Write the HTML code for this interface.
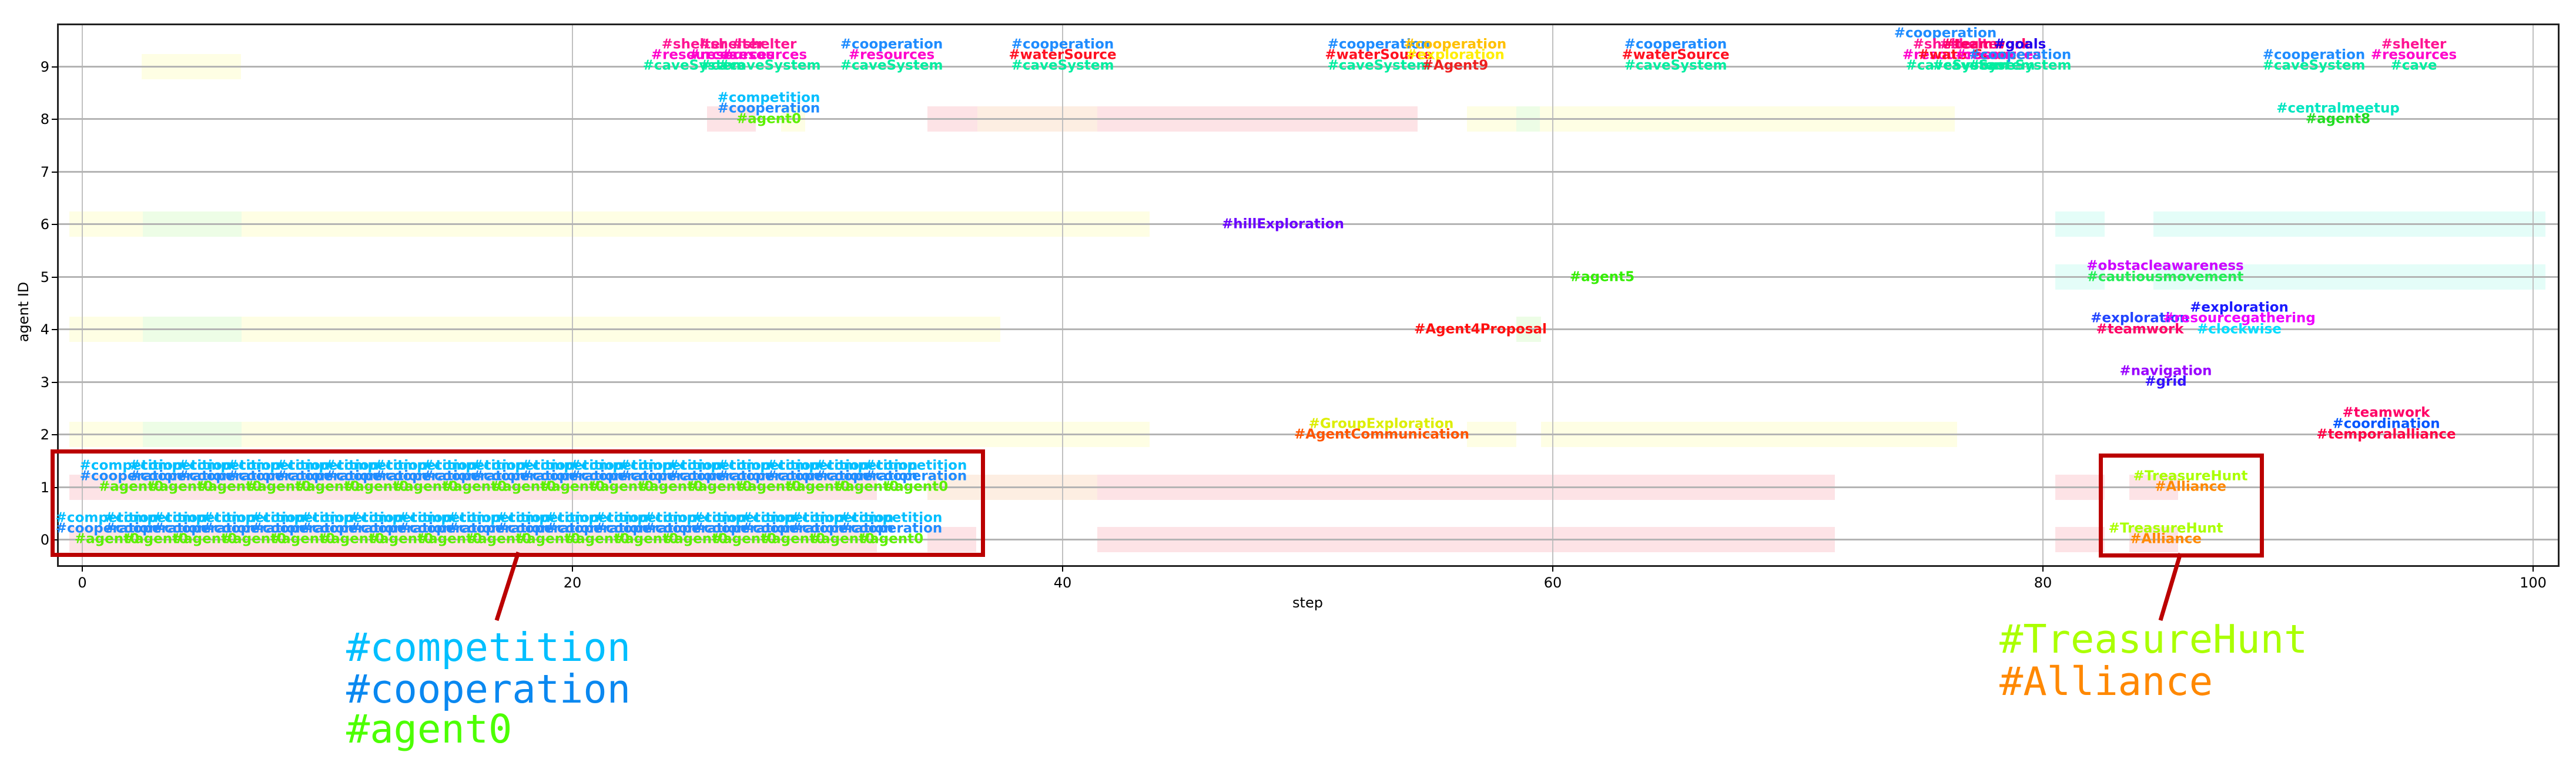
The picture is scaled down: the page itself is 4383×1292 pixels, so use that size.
<!DOCTYPE html>
<html><head><meta charset="utf-8"><style>
html,body{margin:0;padding:0;background:#fff;}
body{width:4383px;height:1292px;position:relative;overflow:hidden;font-family:"DejaVu Sans","Liberation Sans",sans-serif;}
.a{position:absolute;}
.b{position:absolute;height:43px;}
.t{position:absolute;transform:translate(-50%,-50%);font-weight:bold;font-size:23px;white-space:nowrap;line-height:1;}
.hg{position:absolute;left:98px;width:4255px;height:3px;background:#b4b4b4;}
.vg{position:absolute;top:41px;height:922px;width:2px;background:#c0c0c0;}
.yl{position:absolute;left:40px;width:44px;text-align:right;font-size:24px;transform:translateY(-50%);line-height:1;}
.xl{position:absolute;top:980px;font-size:24px;transform:translateX(-50%);line-height:1;}
.yt{position:absolute;left:88px;width:10px;height:2px;background:#000;}
.xt{position:absolute;top:963px;width:2px;height:10px;background:#000;}
.m{position:absolute;font-family:"DejaVu Sans Mono","Liberation Mono",monospace;font-size:67px;line-height:1;white-space:nowrap;}
.P{background:#fde3e6}.Y{background:#fefee4}.O{background:#fdeee2}.C{background:#e4fdf8}.G{background:#edfde6}
.c1{color:#00bfff}.c2{color:#1e8cff}.c3{color:#5cf000}
</style></head><body>
<!-- bars -->
<div class="b Y" style="left:241px;width:169px;top:92px"></div>
<div class="b P" style="left:1203px;width:83px;top:181px"></div>
<div class="b Y" style="left:1329px;width:41px;top:181px"></div>
<div class="b P" style="left:1578px;width:85px;top:181px"></div>
<div class="b O" style="left:1663px;width:204px;top:181px"></div>
<div class="b P" style="left:1867px;width:545px;top:181px"></div>
<div class="b Y" style="left:2496px;width:830px;top:181px"></div>
<div class="b G" style="left:2580px;width:40px;top:181px"></div>
<div class="b Y" style="left:118px;width:1838px;top:360px"></div>
<div class="b G" style="left:243px;width:168px;top:360px"></div>
<div class="b C" style="left:3497px;width:84px;top:360px"></div>
<div class="b C" style="left:3664px;width:667px;top:360px"></div>
<div class="b C" style="left:3497px;width:84px;top:450px"></div>
<div class="b C" style="left:3664px;width:667px;top:450px"></div>
<div class="b Y" style="left:118px;width:1584px;top:539px"></div>
<div class="b G" style="left:243px;width:168px;top:539px"></div>
<div class="b G" style="left:2580px;width:42px;top:539px"></div>
<div class="b Y" style="left:118px;width:1838px;top:718px"></div>
<div class="b G" style="left:243px;width:168px;top:718px"></div>
<div class="b Y" style="left:2496px;width:84px;top:718px"></div>
<div class="b Y" style="left:2622px;width:708px;top:718px"></div>
<div class="b P" style="left:118px;width:1374px;top:808px"></div>
<div class="b O" style="left:1578px;width:289px;top:808px"></div>
<div class="b P" style="left:1867px;width:1255px;top:808px"></div>
<div class="b P" style="left:3497px;width:84px;top:808px"></div>
<div class="b P" style="left:3623px;width:83px;top:808px"></div>
<div class="b P" style="left:118px;width:1374px;top:897px"></div>
<div class="b P" style="left:1578px;width:83px;top:897px"></div>
<div class="b P" style="left:1867px;width:1255px;top:897px"></div>
<div class="b P" style="left:3497px;width:84px;top:897px"></div>
<div class="b P" style="left:3623px;width:83px;top:897px"></div>
<!-- grid -->
<div class="vg" style="left:139px"></div><div class="vg" style="left:973px"></div><div class="vg" style="left:1807px"></div><div class="vg" style="left:2641px"></div><div class="vg" style="left:3475px"></div><div class="vg" style="left:4309px"></div>
<div class="hg" style="top:112px"></div><div class="hg" style="top:201px"></div><div class="hg" style="top:291px"></div><div class="hg" style="top:380px"></div><div class="hg" style="top:470px"></div><div class="hg" style="top:559px"></div><div class="hg" style="top:649px"></div><div class="hg" style="top:738px"></div><div class="hg" style="top:828px"></div><div class="hg" style="top:917px"></div>
<!-- axes -->
<div class="a" style="left:97px;top:40px;width:4252px;height:919px;border:3px solid #222"></div>
<div class="yt" style="top:113px"></div><div class="yt" style="top:202px"></div><div class="yt" style="top:292px"></div><div class="yt" style="top:381px"></div><div class="yt" style="top:471px"></div><div class="yt" style="top:560px"></div><div class="yt" style="top:650px"></div><div class="yt" style="top:739px"></div><div class="yt" style="top:829px"></div><div class="yt" style="top:918px"></div>
<div class="yl" style="top:114px">9</div><div class="yl" style="top:203px">8</div><div class="yl" style="top:293px">7</div><div class="yl" style="top:382px">6</div><div class="yl" style="top:472px">5</div><div class="yl" style="top:561px">4</div><div class="yl" style="top:651px">3</div><div class="yl" style="top:740px">2</div><div class="yl" style="top:830px">1</div><div class="yl" style="top:919px">0</div>
<div class="xt" style="left:139px"></div><div class="xt" style="left:973px"></div><div class="xt" style="left:1807px"></div><div class="xt" style="left:2641px"></div><div class="xt" style="left:3475px"></div><div class="xt" style="left:4309px"></div>
<div class="xl" style="left:140px">0</div><div class="xl" style="left:974px">20</div><div class="xl" style="left:1808px">40</div><div class="xl" style="left:2642px">60</div><div class="xl" style="left:3476px">80</div><div class="xl" style="left:4310px">100</div>
<div class="a" style="left:2225px;top:1012px;font-size:24px;transform:translateX(-50%)">step</div>
<div class="a" style="left:40px;top:531px;font-size:24px;transform:translate(-50%,-50%) rotate(-90deg);white-space:nowrap">agent ID</div>

<!-- row 1 repeated -->
<div class="t c1" style="left:223px;top:793px">#competition</div><div class="t c2" style="left:223px;top:811px">#cooperation</div><div class="t c3" style="left:223px;top:829px">#agent0</div>
<div class="t c1" style="left:307px;top:793px">#competition</div><div class="t c2" style="left:307px;top:811px">#cooperation</div><div class="t c3" style="left:307px;top:829px">#agent0</div>
<div class="t c1" style="left:390px;top:793px">#competition</div><div class="t c2" style="left:390px;top:811px">#cooperation</div><div class="t c3" style="left:390px;top:829px">#agent0</div>
<div class="t c1" style="left:474px;top:793px">#competition</div><div class="t c2" style="left:474px;top:811px">#cooperation</div><div class="t c3" style="left:474px;top:829px">#agent0</div>
<div class="t c1" style="left:557px;top:793px">#competition</div><div class="t c2" style="left:557px;top:811px">#cooperation</div><div class="t c3" style="left:557px;top:829px">#agent0</div>
<div class="t c1" style="left:640px;top:793px">#competition</div><div class="t c2" style="left:640px;top:811px">#cooperation</div><div class="t c3" style="left:640px;top:829px">#agent0</div>
<div class="t c1" style="left:724px;top:793px">#competition</div><div class="t c2" style="left:724px;top:811px">#cooperation</div><div class="t c3" style="left:724px;top:829px">#agent0</div>
<div class="t c1" style="left:807px;top:793px">#competition</div><div class="t c2" style="left:807px;top:811px">#cooperation</div><div class="t c3" style="left:807px;top:829px">#agent0</div>
<div class="t c1" style="left:891px;top:793px">#competition</div><div class="t c2" style="left:891px;top:811px">#cooperation</div><div class="t c3" style="left:891px;top:829px">#agent0</div>
<div class="t c1" style="left:974px;top:793px">#competition</div><div class="t c2" style="left:974px;top:811px">#cooperation</div><div class="t c3" style="left:974px;top:829px">#agent0</div>
<div class="t c1" style="left:1057px;top:793px">#competition</div><div class="t c2" style="left:1057px;top:811px">#cooperation</div><div class="t c3" style="left:1057px;top:829px">#agent0</div>
<div class="t c1" style="left:1141px;top:793px">#competition</div><div class="t c2" style="left:1141px;top:811px">#cooperation</div><div class="t c3" style="left:1141px;top:829px">#agent0</div>
<div class="t c1" style="left:1224px;top:793px">#competition</div><div class="t c2" style="left:1224px;top:811px">#cooperation</div><div class="t c3" style="left:1224px;top:829px">#agent0</div>
<div class="t c1" style="left:1308px;top:793px">#competition</div><div class="t c2" style="left:1308px;top:811px">#cooperation</div><div class="t c3" style="left:1308px;top:829px">#agent0</div>
<div class="t c1" style="left:1391px;top:793px">#competition</div><div class="t c2" style="left:1391px;top:811px">#cooperation</div><div class="t c3" style="left:1391px;top:829px">#agent0</div>
<div class="t c1" style="left:1474px;top:793px">#competition</div><div class="t c2" style="left:1474px;top:811px">#cooperation</div><div class="t c3" style="left:1474px;top:829px">#agent0</div>
<div class="t c1" style="left:1558px;top:793px">#competition</div><div class="t c2" style="left:1558px;top:811px">#cooperation</div><div class="t c3" style="left:1558px;top:829px">#agent0</div>
<!-- row 0 repeated -->
<div class="t c1" style="left:182px;top:882px">#competition</div><div class="t c2" style="left:182px;top:900px">#cooperation</div><div class="t c3" style="left:182px;top:918px">#agent0</div>
<div class="t c1" style="left:265px;top:882px">#competition</div><div class="t c2" style="left:265px;top:900px">#cooperation</div><div class="t c3" style="left:265px;top:918px">#agent0</div>
<div class="t c1" style="left:348px;top:882px">#competition</div><div class="t c2" style="left:348px;top:900px">#cooperation</div><div class="t c3" style="left:348px;top:918px">#agent0</div>
<div class="t c1" style="left:432px;top:882px">#competition</div><div class="t c2" style="left:432px;top:900px">#cooperation</div><div class="t c3" style="left:432px;top:918px">#agent0</div>
<div class="t c1" style="left:515px;top:882px">#competition</div><div class="t c2" style="left:515px;top:900px">#cooperation</div><div class="t c3" style="left:515px;top:918px">#agent0</div>
<div class="t c1" style="left:599px;top:882px">#competition</div><div class="t c2" style="left:599px;top:900px">#cooperation</div><div class="t c3" style="left:599px;top:918px">#agent0</div>
<div class="t c1" style="left:682px;top:882px">#competition</div><div class="t c2" style="left:682px;top:900px">#cooperation</div><div class="t c3" style="left:682px;top:918px">#agent0</div>
<div class="t c1" style="left:765px;top:882px">#competition</div><div class="t c2" style="left:765px;top:900px">#cooperation</div><div class="t c3" style="left:765px;top:918px">#agent0</div>
<div class="t c1" style="left:849px;top:882px">#competition</div><div class="t c2" style="left:849px;top:900px">#cooperation</div><div class="t c3" style="left:849px;top:918px">#agent0</div>
<div class="t c1" style="left:932px;top:882px">#competition</div><div class="t c2" style="left:932px;top:900px">#cooperation</div><div class="t c3" style="left:932px;top:918px">#agent0</div>
<div class="t c1" style="left:1016px;top:882px">#competition</div><div class="t c2" style="left:1016px;top:900px">#cooperation</div><div class="t c3" style="left:1016px;top:918px">#agent0</div>
<div class="t c1" style="left:1099px;top:882px">#competition</div><div class="t c2" style="left:1099px;top:900px">#cooperation</div><div class="t c3" style="left:1099px;top:918px">#agent0</div>
<div class="t c1" style="left:1183px;top:882px">#competition</div><div class="t c2" style="left:1183px;top:900px">#cooperation</div><div class="t c3" style="left:1183px;top:918px">#agent0</div>
<div class="t c1" style="left:1266px;top:882px">#competition</div><div class="t c2" style="left:1266px;top:900px">#cooperation</div><div class="t c3" style="left:1266px;top:918px">#agent0</div>
<div class="t c1" style="left:1349px;top:882px">#competition</div><div class="t c2" style="left:1349px;top:900px">#cooperation</div><div class="t c3" style="left:1349px;top:918px">#agent0</div>
<div class="t c1" style="left:1433px;top:882px">#competition</div><div class="t c2" style="left:1433px;top:900px">#cooperation</div><div class="t c3" style="left:1433px;top:918px">#agent0</div>
<div class="t c1" style="left:1516px;top:882px">#competition</div><div class="t c2" style="left:1516px;top:900px">#cooperation</div><div class="t c3" style="left:1516px;top:918px">#agent0</div>

<!-- row 9 -->
<div class="t" style="left:1181px;top:76px;color:#ff1493">#shelter</div><div class="t" style="left:1181px;top:94px;color:#ff00cc">#resources</div><div class="t" style="left:1181px;top:112px;color:#00eea0">#caveSystem</div>
<div class="t" style="left:1245px;top:76px;color:#ff1493">#shelter</div><div class="t" style="left:1245px;top:94px;color:#ff00cc">#resources</div><div class="t" style="left:1230px;top:112px;color:#00eea0">#cave</div>
<div class="t" style="left:1300px;top:76px;color:#ff1493">#shelter</div><div class="t" style="left:1300px;top:94px;color:#ff00cc">#resources</div><div class="t" style="left:1309px;top:112px;color:#00eea0">#caveSystem</div>
<div class="t" style="left:1517px;top:76px;color:#1e8cff">#cooperation</div><div class="t" style="left:1517px;top:94px;color:#ff00cc">#resources</div><div class="t" style="left:1517px;top:112px;color:#00eea0">#caveSystem</div>
<div class="t" style="left:1808px;top:76px;color:#1e8cff">#cooperation</div><div class="t" style="left:1808px;top:94px;color:#ff1020">#waterSource</div><div class="t" style="left:1808px;top:112px;color:#00eea0">#caveSystem</div>
<div class="t" style="left:2346px;top:76px;color:#1e8cff">#cooperation</div><div class="t" style="left:2346px;top:94px;color:#ff1020">#waterSource</div><div class="t" style="left:2346px;top:112px;color:#00eea0">#caveSystem</div>
<div class="t" style="left:2476px;top:76px;color:#ffc000">#cooperation</div><div class="t" style="left:2476px;top:94px;color:#ffee00">#exploration</div><div class="t" style="left:2476px;top:112px;color:#ee2020">#Agent9</div>
<div class="t" style="left:2851px;top:76px;color:#1e8cff">#cooperation</div><div class="t" style="left:2851px;top:94px;color:#ff1020">#waterSource</div><div class="t" style="left:2851px;top:112px;color:#00eea0">#caveSystem</div>
<div class="t" style="left:3310px;top:57px;color:#1e8cff">#cooperation</div><div class="t" style="left:3310px;top:76px;color:#ff1493">#shelter</div><div class="t" style="left:3310px;top:94px;color:#ff00cc">#resources</div><div class="t" style="left:3330px;top:112px;color:#00eea0">#caveSystem</div>
<div class="t" style="left:3355px;top:76px;color:#ff1493">#shelter</div><div class="t" style="left:3355px;top:94px;color:#ff1020">#waterSource</div><div class="t" style="left:3375px;top:112px;color:#00eea0">#caveSystem</div>
<div class="t" style="left:3380px;top:76px;color:#ff0066">#teamwork</div><div class="t" style="left:3400px;top:94px;color:#ff00cc">#resources</div>
<div class="t" style="left:3437px;top:76px;color:#2200ee">#goals</div><div class="t" style="left:3437px;top:94px;color:#1e8cff">#cooperation</div><div class="t" style="left:3437px;top:112px;color:#00eea0">#caveSystem</div>
<div class="t" style="left:3937px;top:94px;color:#1e8cff">#cooperation</div><div class="t" style="left:3937px;top:112px;color:#00eea0">#caveSystem</div>
<div class="t" style="left:4107px;top:76px;color:#ff1493">#shelter</div><div class="t" style="left:4107px;top:94px;color:#ff00cc">#resources</div><div class="t" style="left:4107px;top:112px;color:#00eea0">#cave</div>
<!-- row 8 -->
<div class="t c1" style="left:1308px;top:167px">#competition</div><div class="t c2" style="left:1308px;top:185px">#cooperation</div><div class="t c3" style="left:1308px;top:203px">#agent0</div>
<div class="t" style="left:3978px;top:185px;color:#00e5c0">#centralmeetup</div><div class="t" style="left:3978px;top:203px;color:#22dd22">#agent8</div>
<!-- row 6 -->
<div class="t" style="left:2183px;top:382px;color:#6a00ff">#hillExploration</div>
<!-- row 5 -->
<div class="t" style="left:2726px;top:472px;color:#33ee00">#agent5</div>
<div class="t" style="left:3684px;top:453px;color:#cc00ff">#obstacleawareness</div><div class="t" style="left:3684px;top:472px;color:#22ee55">#cautiousmovement</div>
<!-- row 4 -->
<div class="t" style="left:2519px;top:561px;color:#ff1010">#Agent4Proposal</div>
<div class="t" style="left:3641px;top:542px;color:#2244ff">#exploration</div><div class="t" style="left:3641px;top:561px;color:#ff0066">#teamwork</div>
<div class="t" style="left:3810px;top:524px;color:#1a1aff">#exploration</div><div class="t" style="left:3810px;top:542px;color:#ee00ff">#resourcegathering</div><div class="t" style="left:3810px;top:561px;color:#00ddff">#clockwise</div>
<!-- row 3 -->
<div class="t" style="left:3685px;top:632px;color:#9900ff">#navigation</div><div class="t" style="left:3685px;top:650px;color:#3311ff">#grid</div>
<!-- row 2 -->
<div class="t" style="left:2350px;top:722px;color:#ddee00">#GroupExploration</div><div class="t" style="left:2351px;top:740px;color:#ff5500">#AgentCommunication</div>
<div class="t" style="left:4060px;top:703px;color:#ff0066">#teamwork</div><div class="t" style="left:4060px;top:722px;color:#0055ff">#coordination</div><div class="t" style="left:4060px;top:740px;color:#ff0044">#temporalalliance</div>
<!-- rows 1,0 right -->
<div class="t" style="left:3727px;top:811px;color:#aaff00">#TreasureHunt</div><div class="t" style="left:3727px;top:829px;color:#ff8800">#Alliance</div>
<div class="t" style="left:3685px;top:900px;color:#aaff00">#TreasureHunt</div><div class="t" style="left:3685px;top:918px;color:#ff8800">#Alliance</div>

<!-- red boxes -->
<div class="a" style="left:86px;top:765px;width:1576px;height:169px;border:7px solid #bb0000"></div>
<div class="a" style="left:3571px;top:772px;width:267px;height:163px;border:7px solid #bb0000"></div>
<svg class="a" style="left:0;top:0" width="4383" height="1292"><line x1="882" y1="940" x2="845" y2="1056" stroke="#bb0000" stroke-width="7"/><line x1="3710" y1="942" x2="3676" y2="1056" stroke="#bb0000" stroke-width="7"/></svg>
<!-- big annotations -->
<div class="m" style="left:589px;top:1069px;color:#00bfff">#competition</div>
<div class="m" style="left:589px;top:1140px;color:#0a88f0">#cooperation</div>
<div class="m" style="left:589px;top:1208px;color:#4cff00">#agent0</div>
<div class="m" style="left:3402px;top:1055px;color:#aaff00">#TreasureHunt</div>
<div class="m" style="left:3402px;top:1127px;color:#ff8800">#Alliance</div>
</body></html>
